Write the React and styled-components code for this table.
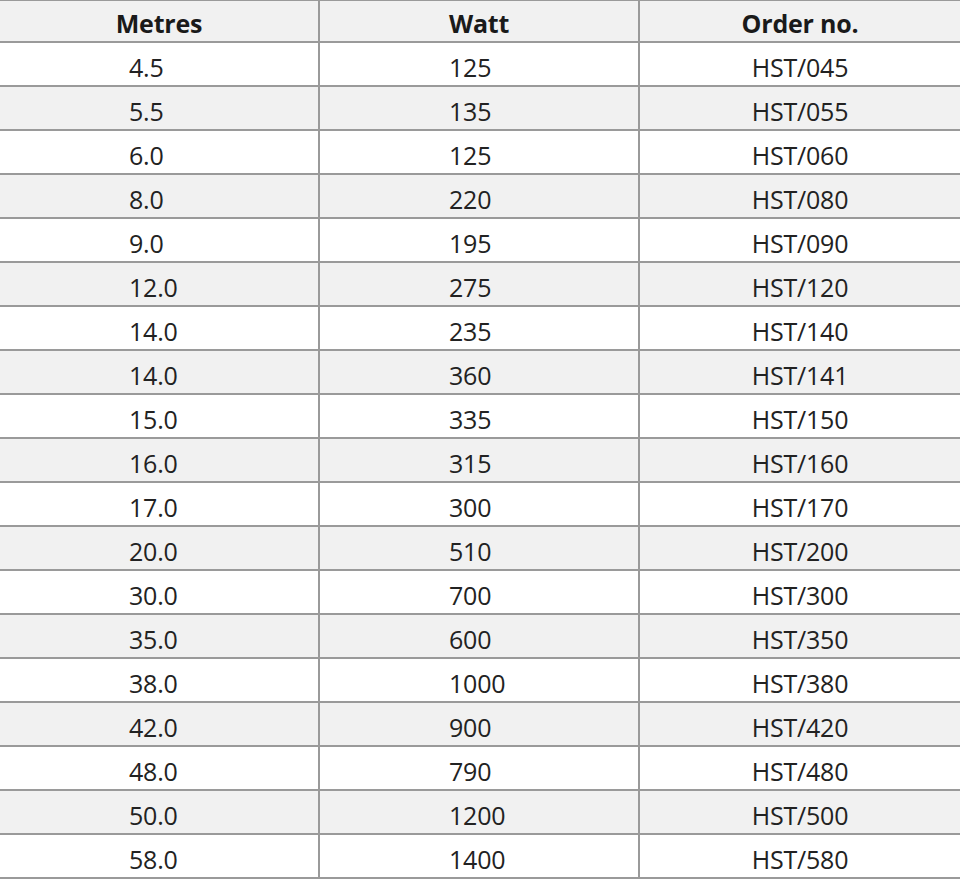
import styled, { createGlobalStyle } from 'styled-components'

const GlobalStyle = createGlobalStyle`
  body {
    margin: 0;
    background: #fff;
    font-family: "Open Sans", "Noto Sans", sans-serif;
  }
`

const ROWS = [
  ['4.5', '125', 'HST/045'],
  ['5.5', '135', 'HST/055'],
  ['6.0', '125', 'HST/060'],
  ['8.0', '220', 'HST/080'],
  ['9.0', '195', 'HST/090'],
  ['12.0', '275', 'HST/120'],
  ['14.0', '235', 'HST/140'],
  ['14.0', '360', 'HST/141'],
  ['15.0', '335', 'HST/150'],
  ['16.0', '315', 'HST/160'],
  ['17.0', '300', 'HST/170'],
  ['20.0', '510', 'HST/200'],
  ['30.0', '700', 'HST/300'],
  ['35.0', '600', 'HST/350'],
  ['38.0', '1000', 'HST/380'],
  ['42.0', '900', 'HST/420'],
  ['48.0', '790', 'HST/480'],
  ['50.0', '1200', 'HST/500'],
  ['58.0', '1400', 'HST/580'],
]

// first two columns are left aligned, order no. is centred
const ALIGN = ['start', 'start', 'center']

const Table = styled.div`
  width: 960px;
  border-top: 1px solid #9a9a9a;
`

const Row = styled.div`
  display: grid;
  grid-template-columns: 320px 320px 320px;
  height: ${p => (p.$head ? 42 : 44)}px;
  box-sizing: border-box;
  border-bottom: 2px solid #9a9a9a;
  background: ${p => (p.$shade ? '#f1f1f1' : '#fff')};
`

const Cell = styled.div`
  display: flex;
  align-items: center;
  justify-content: ${p => (p.$head ? 'center' : p.$align)};
  box-sizing: border-box;
  padding-top: ${p => (p.$head ? 4 : 5)}px;
  padding-left: ${p => (!p.$head && p.$align === 'start' ? 129 : 0)}px;
  border-right: ${p => (p.$last ? 'none' : '2px solid #9a9a9a')};
  font-size: 25px;
  letter-spacing: -0.2px;
  font-weight: ${p => (p.$head ? 700 : 400)};
  color: ${p => (p.$head ? '#1a1a1a' : '#222')};
`

export default function App() {
  const head = ['Metres', 'Watt', 'Order no.']
  return (
    <>
      <GlobalStyle />
      <Table>
        <Row $head $shade>
          {head.map((h, i) => (
            <Cell key={h} $head $last={i === 2}>{h}</Cell>
          ))}
        </Row>
        {ROWS.map((r, i) => (
          <Row key={r[2]} $shade={i % 2 === 1}>
            {r.map((v, j) => (
              <Cell key={j} $align={ALIGN[j]} $last={j === 2}>{v}</Cell>
            ))}
          </Row>
        ))}
      </Table>
    </>
  )
}
